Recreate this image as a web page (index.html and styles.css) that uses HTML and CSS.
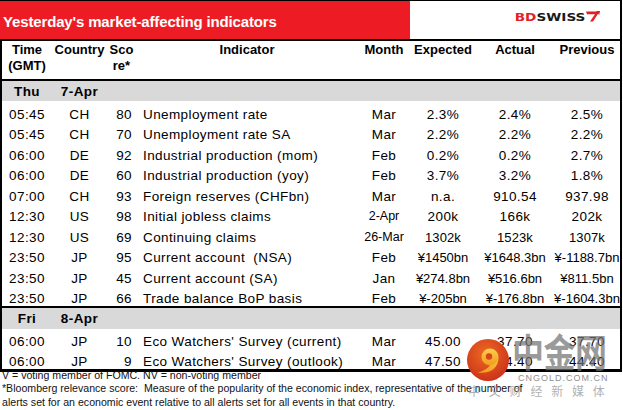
FILE: index.html
```html
<!DOCTYPE html>
<html>
<head>
<meta charset="utf-8">
<link rel="stylesheet" href="styles.css">
</head>
<body>
<div class="sheet">
  <div class="titlebar">
    <div class="title">Yesterday's market-affecting indicators</div>
    <div class="brand-cell">
      <span class="brand"><span class="bd">BD</span><span class="swiss">SWISS</span></span>
      <svg class="brand-icon" width="14" height="11" viewBox="0 0 14 11"><polygon points="0,0.5 13.5,0.5 7,10.5 4,10.5 9,3.2 1,3.2" fill="#e31e24"/><polygon points="10,0 14,0 13.2,4" fill="#e31e24"/></svg>
    </div>
  </div>
  <table class="grid">
    <colgroup>
      <col class="c-time"><col class="c-country"><col class="c-score"><col class="c-ind"><col class="c-month"><col class="c-exp"><col class="c-act"><col class="c-prev">
    </colgroup>
    <thead>
      <tr><th>Time<br>(GMT)</th><th>Country</th><th>Sco<br>re*</th><th>Indicator</th><th>Month</th><th>Expected</th><th>Actual</th><th>Previous</th></tr>
    </thead>
    <tbody>
      <tr class="day"><td>Thu</td><td>7-Apr</td><td colspan="6"></td></tr>
      <tr><td>05:45</td><td>CH</td><td class="score">80</td><td class="ind">Unemployment rate</td><td>Mar</td><td>2.3%</td><td>2.4%</td><td>2.5%</td></tr>
      <tr><td>05:45</td><td>CH</td><td class="score">70</td><td class="ind">Unemployment rate SA</td><td>Mar</td><td>2.2%</td><td>2.2%</td><td>2.2%</td></tr>
      <tr><td>06:00</td><td>DE</td><td class="score">92</td><td class="ind">Industrial production (mom)</td><td>Feb</td><td>0.2%</td><td>0.2%</td><td>2.7%</td></tr>
      <tr><td>06:00</td><td>DE</td><td class="score">60</td><td class="ind">Industrial production (yoy)</td><td>Feb</td><td>3.7%</td><td>3.2%</td><td>1.8%</td></tr>
      <tr><td>07:00</td><td>CH</td><td class="score">93</td><td class="ind">Foreign reserves (CHFbn)</td><td>Mar</td><td>n.a.</td><td>910.54</td><td>937.98</td></tr>
      <tr><td>12:30</td><td>US</td><td class="score">98</td><td class="ind">Initial jobless claims</td><td class="sm">2-Apr</td><td>200k</td><td>166k</td><td>202k</td></tr>
      <tr><td>12:30</td><td>US</td><td class="score">69</td><td class="ind">Continuing claims</td><td class="sm">26-Mar</td><td class="mid">1302k</td><td class="mid">1523k</td><td class="mid">1307k</td></tr>
      <tr><td>23:50</td><td>JP</td><td class="score">95</td><td class="ind">Current account&nbsp; (NSA)</td><td>Feb</td><td class="yen">¥1450bn</td><td class="yen">¥1648.3bn</td><td class="yen">¥-1188.7bn</td></tr>
      <tr><td>23:50</td><td>JP</td><td class="score">45</td><td class="ind">Current account (SA)</td><td>Jan</td><td class="yen">¥274.8bn</td><td class="yen">¥516.6bn</td><td class="yen">¥811.5bn</td></tr>
      <tr><td>23:50</td><td>JP</td><td class="score">66</td><td class="ind">Trade balance BoP basis</td><td>Feb</td><td class="yen">¥-205bn</td><td class="yen">¥-176.8bn</td><td class="yen">¥-1604.3bn</td></tr>
      <tr class="day fri"><td>Fri</td><td>8-Apr</td><td colspan="6"></td></tr>
      <tr class="short"><td>06:00</td><td>JP</td><td class="score">10</td><td class="ind">Eco Watchers' Survey (current)</td><td>Mar</td><td>45.00</td><td>37.70</td><td>37.70</td></tr>
      <tr class="short"><td>06:00</td><td>JP</td><td class="score">9</td><td class="ind">Eco Watchers' Survey (outlook)</td><td>Mar</td><td>47.50</td><td>44.40</td><td>44.40</td></tr>
    </tbody>
  </table>
</div>
<p class="notes">V = voting member of FOMC. NV = non-voting member<br>*Bloomberg relevance score:&nbsp; Measure of the popularity of the economic index, representative of the number of<br>alerts set for an economic event relative to all alerts set for all events in that country.</p>

<div class="wm-logo">
  <svg width="42" height="42" viewBox="0 0 42 42">
    <defs>
      <radialGradient id="wmr" cx="0.45" cy="0.35" r="0.7">
        <stop offset="0" stop-color="#ee6a22"/>
        <stop offset="1" stop-color="#c92f19"/>
      </radialGradient>
      <linearGradient id="wmy" x1="0" y1="0" x2="0" y2="1">
        <stop offset="0" stop-color="#fcd04a"/>
        <stop offset="1" stop-color="#f39a1f"/>
      </linearGradient>
    </defs>
    <circle cx="21" cy="21" r="21" fill="url(#wmr)"/>
    <path d="M31.5,18.5 C31.5,29 23,35.5 10.5,33.5 C19,31.5 24.5,27 25.5,21 Z" fill="url(#wmy)"/>
    <circle cx="23" cy="18" r="8.5" fill="url(#wmy)"/>
    <circle cx="22" cy="17.5" r="3.2" fill="#d9441d"/>
  </svg>
</div>
<div class="wm-cn">中金网</div>
<div class="wm-url">CNGOLD.COM.CN</div>
<div class="wm-sub">中文财经新媒体</div>
</body>
</html>
```

FILE: styles.css
```css
* {
  box-sizing: border-box;
}

body {
  margin: 0;
  width: 623px;
  height: 410px;
  overflow: hidden;
  position: relative;
  background: #ffffff;
  color: #000000;
  font-family: "Liberation Sans", Arial, sans-serif;
}

.sheet {
  width: 622px;
  border-top: 1px solid #000;
  border-right: 2px solid #000;
  border-bottom: 3px solid #000;
}

.titlebar {
  display: flex;
  height: 40px;
  border-bottom: 2px solid #000;
}

.title {
  width: 410px;
  background: #ed1c24;
  color: #ffffff;
  font-weight: bold;
  font-size: 15px;
  letter-spacing: -0.15px;
  padding-left: 3px;
  padding-top: 2px;
  display: flex;
  align-items: center;
  white-space: nowrap;
}

.brand-cell {
  flex: 1;
  display: flex;
  justify-content: flex-end;
  align-items: flex-start;
  padding: 10px 20px 0 0;
}

.brand {
  display: inline-block;
  font-family: "DejaVu Sans", sans-serif;
  font-weight: bold;
  font-size: 10.5px;
  line-height: 12px;
  transform: scaleX(1.3);
  transform-origin: right center;
  margin-right: 1px;
}

.bd {
  color: #e31e24;
}

.swiss {
  color: #1a1a1a;
}

.brand-icon {
  display: block;
  margin-top: 0px;
}

.grid {
  width: 620px;
  border-collapse: separate;
  border-spacing: 0;
  table-layout: fixed;
  border-left: 2px solid #000;
}

.c-time { width: 50px; }
.c-country { width: 55px; }
.c-score { width: 29px; }
.c-ind { width: 222px; }
.c-month { width: 52px; }
.c-exp { width: 66px; }
.c-act { width: 78px; }
.c-prev { width: 66px; }

.grid th {
  font-size: 13px;
  font-weight: bold;
  line-height: 16px;
  padding: 1px 0 5px;
  vertical-align: top;
  text-align: center;
  white-space: nowrap;
  border-bottom: 2px solid #000;
}

.grid td {
  font-size: 13.5px;
  letter-spacing: 0.4px;
  line-height: 15px;
  height: 20.5px;
  padding: 5.5px 0 0;
  vertical-align: bottom;
  text-align: center;
  white-space: nowrap;
}

.grid tr.short td {
  height: 20px;
  padding-top: 5px;
}

.grid td.score {
  text-align: right;
  padding-right: 4px;
}

.grid td.ind {
  text-align: left;
  padding-left: 7px;
}

.grid td.sm {
  font-size: 12.5px;
  letter-spacing: 0;
}

.grid td.mid {
  font-size: 13px;
  letter-spacing: 0.1px;
}

.grid td.yen {
  font-size: 13px;
  letter-spacing: 0;
}

.grid tr.day td {
  background: #d9d9d9;
  font-weight: bold;
  height: 20px;
  padding: 2.5px 0;
  vertical-align: middle;
}

.grid tr.day.fri td {
  border-top: 2px solid #000;
  height: 23px;
  padding: 3px 0;
}

.notes {
  margin: -3px 0 0;
  padding-left: 2px;
  font-size: 10.6px;
  line-height: 13.3px;
  color: #111;
  white-space: nowrap;
}

.wm-logo {
  position: absolute;
  left: 467px;
  top: 339px;
  width: 42px;
  height: 42px;
}

.wm-logo svg {
  display: block;
}

.wm-cn {
  position: absolute;
  left: 512px;
  top: 331px;
  font-family: "Noto Sans CJK SC", sans-serif;
  font-weight: bold;
  font-size: 32px;
  line-height: 32px;
  letter-spacing: -0.5px;
  color: rgba(115, 115, 115, 0.72);
  transform: scaleY(1.2);
  transform-origin: left top;
}

.wm-url {
  position: absolute;
  left: 518px;
  top: 373px;
  font-family: "Liberation Sans", Arial, sans-serif;
  font-size: 9px;
  line-height: 10px;
  letter-spacing: 1px;
  color: #8f8f8f;
}

.wm-sub {
  position: absolute;
  left: 468px;
  top: 384px;
  font-family: "Noto Sans CJK SC", sans-serif;
  font-size: 12px;
  line-height: 14px;
  letter-spacing: 8.8px;
  color: rgba(150, 150, 150, 0.75);
}
```
